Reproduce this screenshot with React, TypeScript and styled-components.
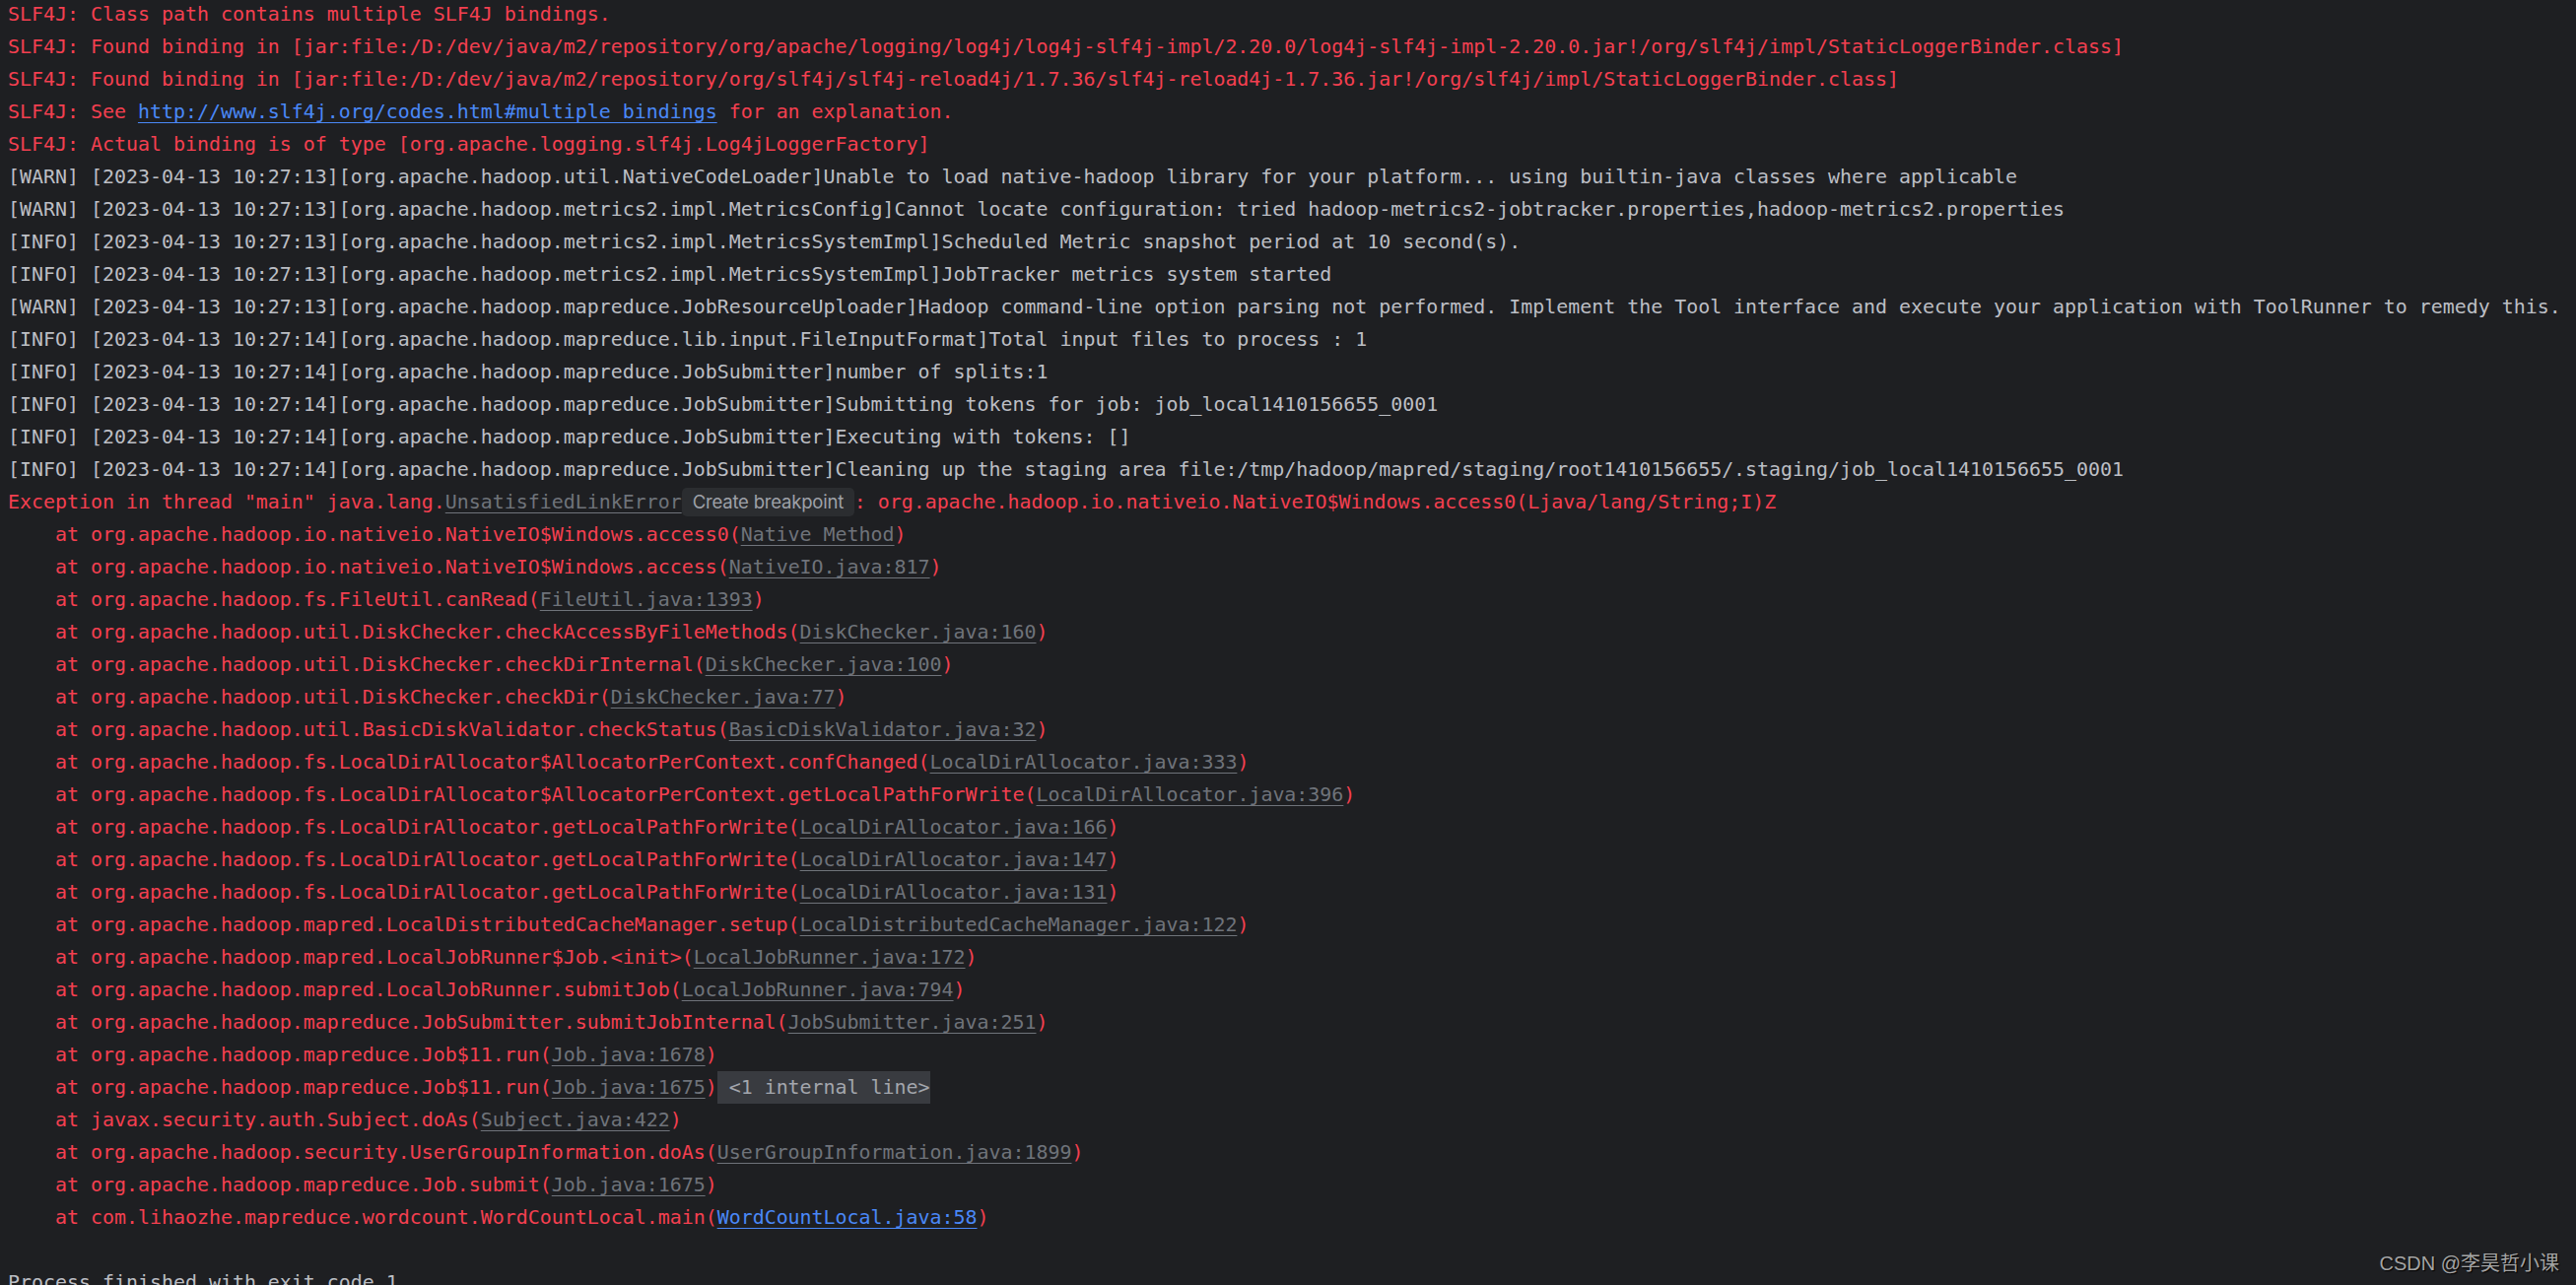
import React from "react";
import styled, { createGlobalStyle } from "styled-components";

type Seg =
	| { t: "txt"; v: string }
	| { t: "lib"; v: string }
	| { t: "url"; v: string }
	| { t: "hint"; v: string }
	| { t: "fold"; v: string };

type Row = { tone: "err" | "out"; segs: Seg[] };

const GlobalStyle = createGlobalStyle`
	html, body {
		margin: 0;
		padding: 0;
		background: #1e1f22;
	}
	body {
		overflow: hidden;
	}
`;

const txt = (v: string): Seg => ({ t: "txt", v });

const out = (v: string): Row => ({ tone: "out", segs: [txt(v)] });
const err = (v: string): Row => ({ tone: "err", segs: [txt(v)] });

const frame = (method: string, source: string, own = false): Row => ({
	tone: "err",
	segs: [txt(`\tat ${method}(`), { t: own ? "url" : "lib", v: source }, txt(")")],
});

const rows: Row[] = [
	err("SLF4J: Class path contains multiple SLF4J bindings."),
	err(
		"SLF4J: Found binding in [jar:file:/D:/dev/java/m2/repository/org/apache/logging/log4j/log4j-slf4j-impl/2.20.0/log4j-slf4j-impl-2.20.0.jar!/org/slf4j/impl/StaticLoggerBinder.class]"
	),
	err(
		"SLF4J: Found binding in [jar:file:/D:/dev/java/m2/repository/org/slf4j/slf4j-reload4j/1.7.36/slf4j-reload4j-1.7.36.jar!/org/slf4j/impl/StaticLoggerBinder.class]"
	),
	{
		tone: "err",
		segs: [
			txt("SLF4J: See "),
			{ t: "url", v: "http://www.slf4j.org/codes.html#multiple_bindings" },
			txt(" for an explanation."),
		],
	},
	err("SLF4J: Actual binding is of type [org.apache.logging.slf4j.Log4jLoggerFactory]"),
	out(
		"[WARN] [2023-04-13 10:27:13][org.apache.hadoop.util.NativeCodeLoader]Unable to load native-hadoop library for your platform... using builtin-java classes where applicable"
	),
	out(
		"[WARN] [2023-04-13 10:27:13][org.apache.hadoop.metrics2.impl.MetricsConfig]Cannot locate configuration: tried hadoop-metrics2-jobtracker.properties,hadoop-metrics2.properties"
	),
	out(
		"[INFO] [2023-04-13 10:27:13][org.apache.hadoop.metrics2.impl.MetricsSystemImpl]Scheduled Metric snapshot period at 10 second(s)."
	),
	out(
		"[INFO] [2023-04-13 10:27:13][org.apache.hadoop.metrics2.impl.MetricsSystemImpl]JobTracker metrics system started"
	),
	out(
		"[WARN] [2023-04-13 10:27:13][org.apache.hadoop.mapreduce.JobResourceUploader]Hadoop command-line option parsing not performed. Implement the Tool interface and execute your application with ToolRunner to remedy this."
	),
	out(
		"[INFO] [2023-04-13 10:27:14][org.apache.hadoop.mapreduce.lib.input.FileInputFormat]Total input files to process : 1"
	),
	out("[INFO] [2023-04-13 10:27:14][org.apache.hadoop.mapreduce.JobSubmitter]number of splits:1"),
	out(
		"[INFO] [2023-04-13 10:27:14][org.apache.hadoop.mapreduce.JobSubmitter]Submitting tokens for job: job_local1410156655_0001"
	),
	out("[INFO] [2023-04-13 10:27:14][org.apache.hadoop.mapreduce.JobSubmitter]Executing with tokens: []"),
	out(
		"[INFO] [2023-04-13 10:27:14][org.apache.hadoop.mapreduce.JobSubmitter]Cleaning up the staging area file:/tmp/hadoop/mapred/staging/root1410156655/.staging/job_local1410156655_0001"
	),
	{
		tone: "err",
		segs: [
			txt('Exception in thread "main" java.lang.'),
			{ t: "lib", v: "UnsatisfiedLinkError" },
			{ t: "hint", v: "Create breakpoint" },
			txt(": org.apache.hadoop.io.nativeio.NativeIO$Windows.access0(Ljava/lang/String;I)Z"),
		],
	},
	frame("org.apache.hadoop.io.nativeio.NativeIO$Windows.access0", "Native Method"),
	frame("org.apache.hadoop.io.nativeio.NativeIO$Windows.access", "NativeIO.java:817"),
	frame("org.apache.hadoop.fs.FileUtil.canRead", "FileUtil.java:1393"),
	frame("org.apache.hadoop.util.DiskChecker.checkAccessByFileMethods", "DiskChecker.java:160"),
	frame("org.apache.hadoop.util.DiskChecker.checkDirInternal", "DiskChecker.java:100"),
	frame("org.apache.hadoop.util.DiskChecker.checkDir", "DiskChecker.java:77"),
	frame("org.apache.hadoop.util.BasicDiskValidator.checkStatus", "BasicDiskValidator.java:32"),
	frame("org.apache.hadoop.fs.LocalDirAllocator$AllocatorPerContext.confChanged", "LocalDirAllocator.java:333"),
	frame(
		"org.apache.hadoop.fs.LocalDirAllocator$AllocatorPerContext.getLocalPathForWrite",
		"LocalDirAllocator.java:396"
	),
	frame("org.apache.hadoop.fs.LocalDirAllocator.getLocalPathForWrite", "LocalDirAllocator.java:166"),
	frame("org.apache.hadoop.fs.LocalDirAllocator.getLocalPathForWrite", "LocalDirAllocator.java:147"),
	frame("org.apache.hadoop.fs.LocalDirAllocator.getLocalPathForWrite", "LocalDirAllocator.java:131"),
	frame("org.apache.hadoop.mapred.LocalDistributedCacheManager.setup", "LocalDistributedCacheManager.java:122"),
	frame("org.apache.hadoop.mapred.LocalJobRunner$Job.<init>", "LocalJobRunner.java:172"),
	frame("org.apache.hadoop.mapred.LocalJobRunner.submitJob", "LocalJobRunner.java:794"),
	frame("org.apache.hadoop.mapreduce.JobSubmitter.submitJobInternal", "JobSubmitter.java:251"),
	frame("org.apache.hadoop.mapreduce.Job$11.run", "Job.java:1678"),
	{
		tone: "err",
		segs: [
			...frame("org.apache.hadoop.mapreduce.Job$11.run", "Job.java:1675").segs,
			{ t: "fold", v: " <1 internal line>" },
		],
	},
	frame("javax.security.auth.Subject.doAs", "Subject.java:422"),
	frame("org.apache.hadoop.security.UserGroupInformation.doAs", "UserGroupInformation.java:1899"),
	frame("org.apache.hadoop.mapreduce.Job.submit", "Job.java:1675"),
	frame("com.lihaozhe.mapreduce.wordcount.WordCountLocal.main", "WordCountLocal.java:58", true),
	out(""),
	out("Process finished with exit code 1"),
];

const App = () => {
	return (
		<Page>
			<GlobalStyle />
			<Console>
				{rows.map((row, i) => (
					<Line key={i} tone={row.tone}>
						{row.segs.map((s, j) => {
							if (s.t === "lib") return <LibLink key={j}>{s.v}</LibLink>;
							if (s.t === "url") return <UrlLink key={j}>{s.v}</UrlLink>;
							if (s.t === "hint") return <Hint key={j}>{s.v}</Hint>;
							if (s.t === "fold") return <Fold key={j}>{s.v}</Fold>;
							return <React.Fragment key={j}>{s.v}</React.Fragment>;
						})}
						{row.segs.length === 1 && row.segs[0].v === "" ? "\u00a0" : null}
					</Line>
				))}
			</Console>
			<Watermark>CSDN @李昊哲小课</Watermark>
		</Page>
	);
};

export default App;

const Page = styled.div`
	position: relative;
	width: 2614px;
	height: 1304px;
	overflow: hidden;
	background: #1e1f22;
`;

const Console = styled.div`
	display: flex;
	flex-direction: column;
	margin-top: -2px;
	padding-left: 8px;
	font-family: "DejaVu Sans Mono", "Liberation Mono", monospace;
	font-size: 19.93px;
	line-height: 33px;
	white-space: pre;
	tab-size: 4;
	-moz-tab-size: 4;
`;

const Line = styled.div<{ tone: "err" | "out" }>`
	height: 33px;
	color: ${({ tone }) => (tone === "err" ? "#f43f50" : "#bcbec4")};
`;

const LibLink = styled.span`
	color: #6f737a;
	text-decoration: underline;
	text-decoration-thickness: 1px;
	text-underline-offset: 4px;
`;

const UrlLink = styled.span`
	color: #4a88f7;
	text-decoration: underline;
	text-decoration-thickness: 1px;
	text-underline-offset: 4px;
`;

const Hint = styled.span`
	display: inline-block;
	vertical-align: top;
	box-sizing: border-box;
	width: 175px;
	height: 29px;
	margin-top: 2px;
	padding-left: 11px;
	border-radius: 5px;
	background: #2b2d30;
	color: #9ea1a8;
	font-family: Inter, "Noto Sans", sans-serif;
	font-size: 18.5px;
	line-height: 29px;
	letter-spacing: -0.2px;
`;

const Fold = styled.span`
	display: inline-block;
	vertical-align: top;
	height: 33px;
	background: #393b40;
	color: #a3a6ad;
`;

const Watermark = styled.div`
	position: absolute;
	right: 17px;
	bottom: 9px;
	font-family: "Liberation Sans", "Noto Sans CJK SC", sans-serif;
	font-size: 20px;
	color: #a4a4a4;
	text-shadow: 1px 1px 1px #000;
`;
